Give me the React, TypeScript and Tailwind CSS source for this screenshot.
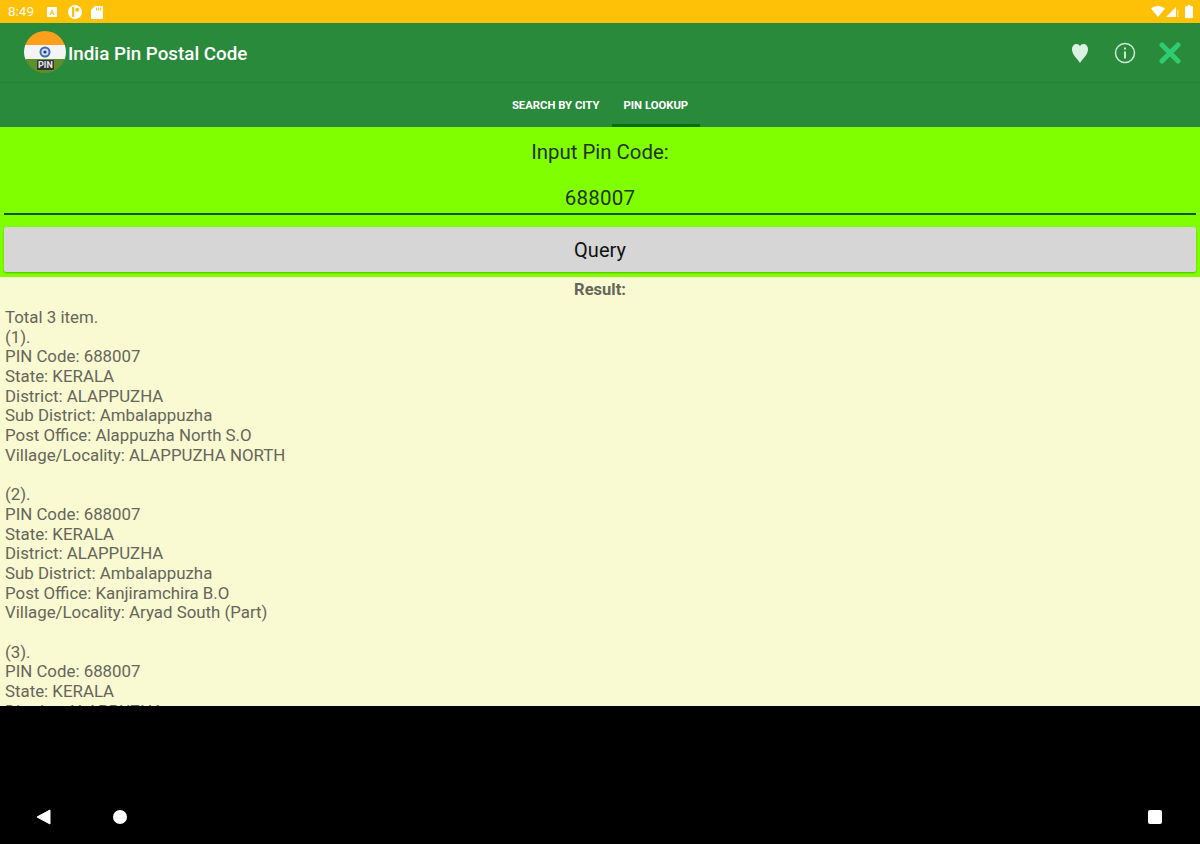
const resultLines = [
  'Total 3 item.',
  '(1).',
  'PIN Code: 688007',
  'State: KERALA',
  'District: ALAPPUZHA',
  'Sub District: Ambalappuzha',
  'Post Office: Alappuzha North S.O',
  'Village/Locality: ALAPPUZHA NORTH',
  '',
  '(2).',
  'PIN Code: 688007',
  'State: KERALA',
  'District: ALAPPUZHA',
  'Sub District: Ambalappuzha',
  'Post Office: Kanjiramchira B.O',
  'Village/Locality: Aryad South (Part)',
  '',
  '(3).',
  'PIN Code: 688007',
  'State: KERALA',
  'District: ALAPPUZHA',
];

const StatusBar = () => (
  <div className="flex h-[23px] items-center justify-between bg-[#ffc107] pl-[8px] pr-[7px] text-white">
    <div className="flex items-center">
      <span className="text-[13.500px] leading-none text-[#fffaf0]">8:49</span>
      <svg width="12" height="12" viewBox="0 0 12 12" className="ml-[12px]">
        <rect x="1" y="1" width="10" height="10" rx="1" fill="#fff" />
        <path d="M6 2.800 8.400 9H7.300L6.800 7.700H5.200L4.700 9H3.600ZM5.500 6.800h1L6 5.300Z" fill="#ffc107" />
      </svg>
      <svg width="16" height="16" viewBox="0 0 16 16" className="ml-[9px]">
        <circle cx="8" cy="8" r="7" fill="#fff" />
        <rect x="5" y="3" width="2.200" height="10" fill="#ffc107" />
        <circle cx="10.200" cy="5.800" r="2" fill="#ffc107" />
      </svg>
      <svg width="12" height="14" viewBox="0 0 12 14" className="ml-[8px]">
        <path d="M4 1h6.500A1.200 1.200 0 0 1 12 2.200V12.500A1.300 1.300 0 0 1 10.700 14H1.300A1.300 1.300 0 0 1 0 12.500V5Z" fill="#fff" />
        <path d="M5 2.500h1v3H5ZM7 2.500h1v3H7ZM9 2.500h1v3H9Z" fill="#ffc107" />
      </svg>
    </div>
    <div className="flex items-center">
      <svg width="14" height="11" viewBox="0 0 14 11">
        <path d="M0 2.600C4-.8 10-.8 14 2.600L7 11Z" fill="#fff" />
      </svg>
      <svg width="13" height="12" viewBox="0 0 13 12" className="ml-[1px]">
        <path d="M10 1v10H0Z" fill="#fff" opacity="0.95" />
        <path d="M11 4h1.500v7H11Z" fill="#fff" opacity="0.5" />
      </svg>
      <svg width="8" height="13" viewBox="0 0 8 13" className="ml-[6px]">
        <path d="M2.500 0h3v1.200H7a1 1 0 0 1 1 1V12a1 1 0 0 1-1 1H1a1 1 0 0 1-1-1V2.200a1 1 0 0 1 1-1h1.500Z" fill="#fff" />
      </svg>
    </div>
  </div>
);

const FlagLogo = () => (
  <svg width="44" height="44" viewBox="0 0 44 44" className="shrink-0">
    <defs>
      <clipPath id="logo-clip">
        <circle cx="22" cy="22" r="21" />
      </clipPath>
    </defs>
    <g clipPath="url(#logo-clip)">
      <rect width="44" height="16" fill="#fca01b" />
      <rect y="15" width="44" height="15" fill="#f4f4f6" />
      <rect y="29" width="44" height="15" fill="#5f8f2a" />
    </g>
    <circle cx="22" cy="22" r="5.500" fill="#3f6fae" />
    <circle cx="22" cy="22" r="3.500" fill="#d5dfee" />
    <circle cx="22" cy="22" r="1.600" fill="#1f3f80" />
  </svg>
);

const ToolbarIcons = () => (
  <div className="flex items-center">
    <svg width="18" height="20" viewBox="0 0 18 20">
      <path d="M9 20C6.500 15.500 1 12 1 6.200 1 3 3.200 1 5.500 1 7 1 8.300 1.800 9 3.200 9.700 1.800 11 1 12.500 1 14.800 1 17 3 17 6.200 17 12 11.500 15.500 9 20Z" fill="#dcf0e2" />
    </svg>
    <svg width="22" height="22" viewBox="0 0 22 22" className="ml-[25px]">
      <circle cx="11" cy="11" r="9.500" fill="none" stroke="#cfe8d6" strokeWidth="1.500" />
      <rect x="10" y="9.500" width="2" height="7" fill="#cfe8d6" />
      <rect x="10" y="5.500" width="2" height="2" fill="#cfe8d6" />
    </svg>
    <svg width="22" height="22" viewBox="0 0 22 22" className="ml-[23px]">
      <path d="M3 3 19 19M19 3 3 19" stroke="#2ecb71" strokeWidth="5" strokeLinecap="round" />
    </svg>
  </div>
);

export default function App() {
  return (
    <div className="flex h-[844px] w-[1200px] flex-col overflow-hidden bg-black font-['Roboto',sans-serif]">
      <StatusBar />

      <div className="flex h-[60px] items-center justify-between border-b border-[#27803a] bg-[#2a8a3b] pl-[23px] pr-[19px]">
        <div className="relative flex items-center">
          <div className="-mt-[2px] flex">
            <FlagLogo />
          </div>
          <span className="absolute left-[14px] top-[28px] rounded-[1px] bg-[#333] px-[1px] text-[9px] font-bold leading-[10px] text-[#e8e8e8]">
            PIN
          </span>
          <h1 className="ml-[1px] pt-[4px] text-[18.800px] font-medium leading-none text-white">India Pin Postal Code</h1>
        </div>
        <ToolbarIcons />
      </div>

      <div className="flex h-[44px] justify-center bg-[#2a8a3b]">
        <div className="flex h-full items-center px-[12px] pt-[3px] text-[11.300px] font-bold text-white">SEARCH BY CITY</div>
        <div className="flex h-full items-center border-b-[3px] border-[#0a7000] px-[12px] pt-[6px] text-[11.300px] font-bold text-white">PIN LOOKUP</div>
      </div>

      <div className="flex h-[150px] flex-col bg-[#7fff00] px-[4px]">
        <p className="pt-[13px] text-center text-[20.400px] leading-[24px] text-[#24331a]">Input Pin Code:</p>
        <p className="mt-[22px] border-b-[2px] border-[#12541a] pb-[3px] text-center text-[20.500px] leading-[24px] tracking-[0.2px] text-[#24331a]">688007</p>
        <button type="button" className="mt-[12px] h-[45px] rounded-[2px] bg-[#d6d6d6] pt-[1px] text-[20px] text-[#111] shadow-[0_1px_2px_rgba(40,140,0,0.6)]">
          Query
        </button>
      </div>

      <div className="h-[429px] overflow-hidden bg-[#f9f9d2] text-[#66665a]">
        <p className="pt-[3px] text-center text-[16.500px] font-bold leading-[20px]">Result:</p>
        <div className="mt-[8px] px-[5px] text-[16.850px] leading-[19.700px]">
          {resultLines.map((line, i) => (
            <div key={i} className="h-[19.700px] whitespace-pre">{line}</div>
          ))}
        </div>
      </div>

      <div className="flex flex-1 items-center justify-between pb-[4px] pl-[36px] pr-[38px] pt-[88px]">
        <div className="flex items-center">
          <svg width="15" height="16" viewBox="0 0 15 16">
            <path d="M14 1v14L1 8Z" fill="#fff" stroke="#fff" strokeLinejoin="round" />
          </svg>
          <div className="ml-[62px] h-[14px] w-[14px] rounded-full bg-white" />
        </div>
        <div className="h-[14px] w-[14px] rounded-[2px] bg-white" />
      </div>
    </div>
  );
}
